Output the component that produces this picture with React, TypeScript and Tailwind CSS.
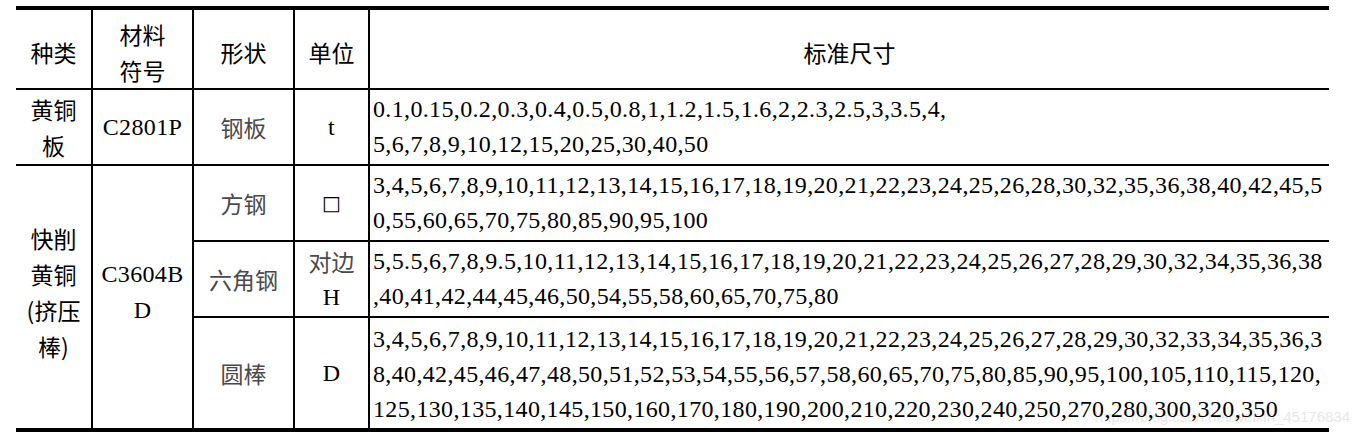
const serif = "font-['Liberation_Serif','Noto_Sans_CJK_SC',serif]"
const cjk = "font-['Noto_Sans_CJK_SC','Liberation_Sans',sans-serif]"

const sizes: Record<string, string[]> = {
  plate: ['0.1,0.15,0.2,0.3,0.4,0.5,0.8,1,1.2,1.5,1.6,2,2.3,2.5,3,3.5,4,', '5,6,7,8,9,10,12,15,20,25,30,40,50'],
  square: [
    '3,4,5,6,7,8,9,10,11,12,13,14,15,16,17,18,19,20,21,22,23,24,25,26,28,30,32,35,36,38,40,42,45,5',
    '0,55,60,65,70,75,80,85,90,95,100',
  ],
  hex: [
    '5,5.5,6,7,8,9.5,10,11,12,13,14,15,16,17,18,19,20,21,22,23,24,25,26,27,28,29,30,32,34,35,36,38',
    ',40,41,42,44,45,46,50,54,55,58,60,65,70,75,80',
  ],
  round: [
    '3,4,5,6,7,8,9,10,11,12,13,14,15,16,17,18,19,20,21,22,23,24,25,26,27,28,29,30,32,33,34,35,36,3',
    '8,40,42,45,46,47,48,50,51,52,53,54,55,56,57,58,60,65,70,75,80,85,90,95,100,105,110,115,120,',
    '125,130,135,140,145,150,160,170,180,190,200,210,220,230,240,250,270,280,300,320,350',
  ],
}

const num = `${serif} text-[24px] leading-[35px] tracking-[0.35px] text-black`

function Sizes({ lines, last }: { lines: string[]; last?: boolean }) {
  return (
    <td className={`border-2 border-black border-r-0 ${last ? 'border-b-0 pt-[2px]' : ''} pl-[3px] align-middle ${num}`}>
      {lines.map((l) => (
        <div key={l} className="whitespace-nowrap">
          {l}
        </div>
      ))}
    </td>
  )
}

const cell = 'border-2 border-black text-center align-middle p-0'
const head = `${cell} ${cjk} text-[23px] leading-[36px] text-black`
const thin = `${cell} ${cjk} text-[23px] leading-[36px] text-[#4a4a4a]`
const latin = `${cell} ${serif} text-[24px] leading-[36px] tracking-[0.35px] text-black`

export default function App() {
  return (
    <div className="relative w-[1360px] h-[434px] bg-white pt-[6px] pl-[16px]">
      <div className="absolute right-[10px] top-[406px] font-['Liberation_Sans',sans-serif] text-[15px] text-[#e8e8e8]">
        https://blog.csdn.net/weixin_45176834
      </div>
      <table className="relative table-fixed border-collapse w-[1313px] border-t-[4px] border-b-[4px] border-black">
        <colgroup>
          <col className="w-[76px]" />
          <col className="w-[101px]" />
          <col className="w-[101px]" />
          <col className="w-[75px]" />
          <col className="w-[960px]" />
        </colgroup>
        <tbody>
          <tr className="h-[76px]">
            <td className={`${head} border-l-0 border-t-0 pt-[6px]`}>种类</td>
            <td className={`${head} border-t-0 pt-[6px]`}>
              材料
              <br />
              符号
            </td>
            <td className={`${head} border-t-0 pt-[6px]`}>形状</td>
            <td className={`${head} border-t-0 pt-[6px]`}>单位</td>
            <td className={`${head} border-t-0 border-r-0 pt-[6px]`}>标准尺寸</td>
          </tr>
          <tr className="h-[76px]">
            <td className={`${head} border-l-0`}>
              黄铜
              <br />板
            </td>
            <td className={latin}>C2801P</td>
            <td className={thin}>钢板</td>
            <td className={latin}>t</td>
            <Sizes lines={sizes.plate} />
          </tr>
          <tr className="h-[76px]">
            <td rowSpan={3} className={`${head} border-l-0 border-b-0 pb-[10px]`}>
              快削
              <br />
              黄铜
              <br />
              (挤压
              <br />
              棒)
            </td>
            <td rowSpan={3} className={`${latin} border-b-0 pb-[10px]`}>
              C3604B
              <br />D
            </td>
            <td className={thin}>方钢</td>
            <td className={`${cell} font-['DejaVu_Sans',sans-serif] text-[20px] text-black`}>□</td>
            <Sizes lines={sizes.square} />
          </tr>
          <tr className="h-[76px]">
            <td className={thin}>六角钢</td>
            <td className={`${cell} leading-[36px]`}>
              <div className={`${cjk} text-[23px] text-[#4a4a4a]`}>对边</div>
              <div className={`${serif} text-[24px] text-black`}>H</div>
            </td>
            <Sizes lines={sizes.hex} />
          </tr>
          <tr className="h-[113px]">
            <td className={`${thin} border-b-0`}>圆棒</td>
            <td className={`${latin} border-b-0`}>D</td>
            <Sizes lines={sizes.round} last />
          </tr>
        </tbody>
      </table>
    </div>
  )
}
